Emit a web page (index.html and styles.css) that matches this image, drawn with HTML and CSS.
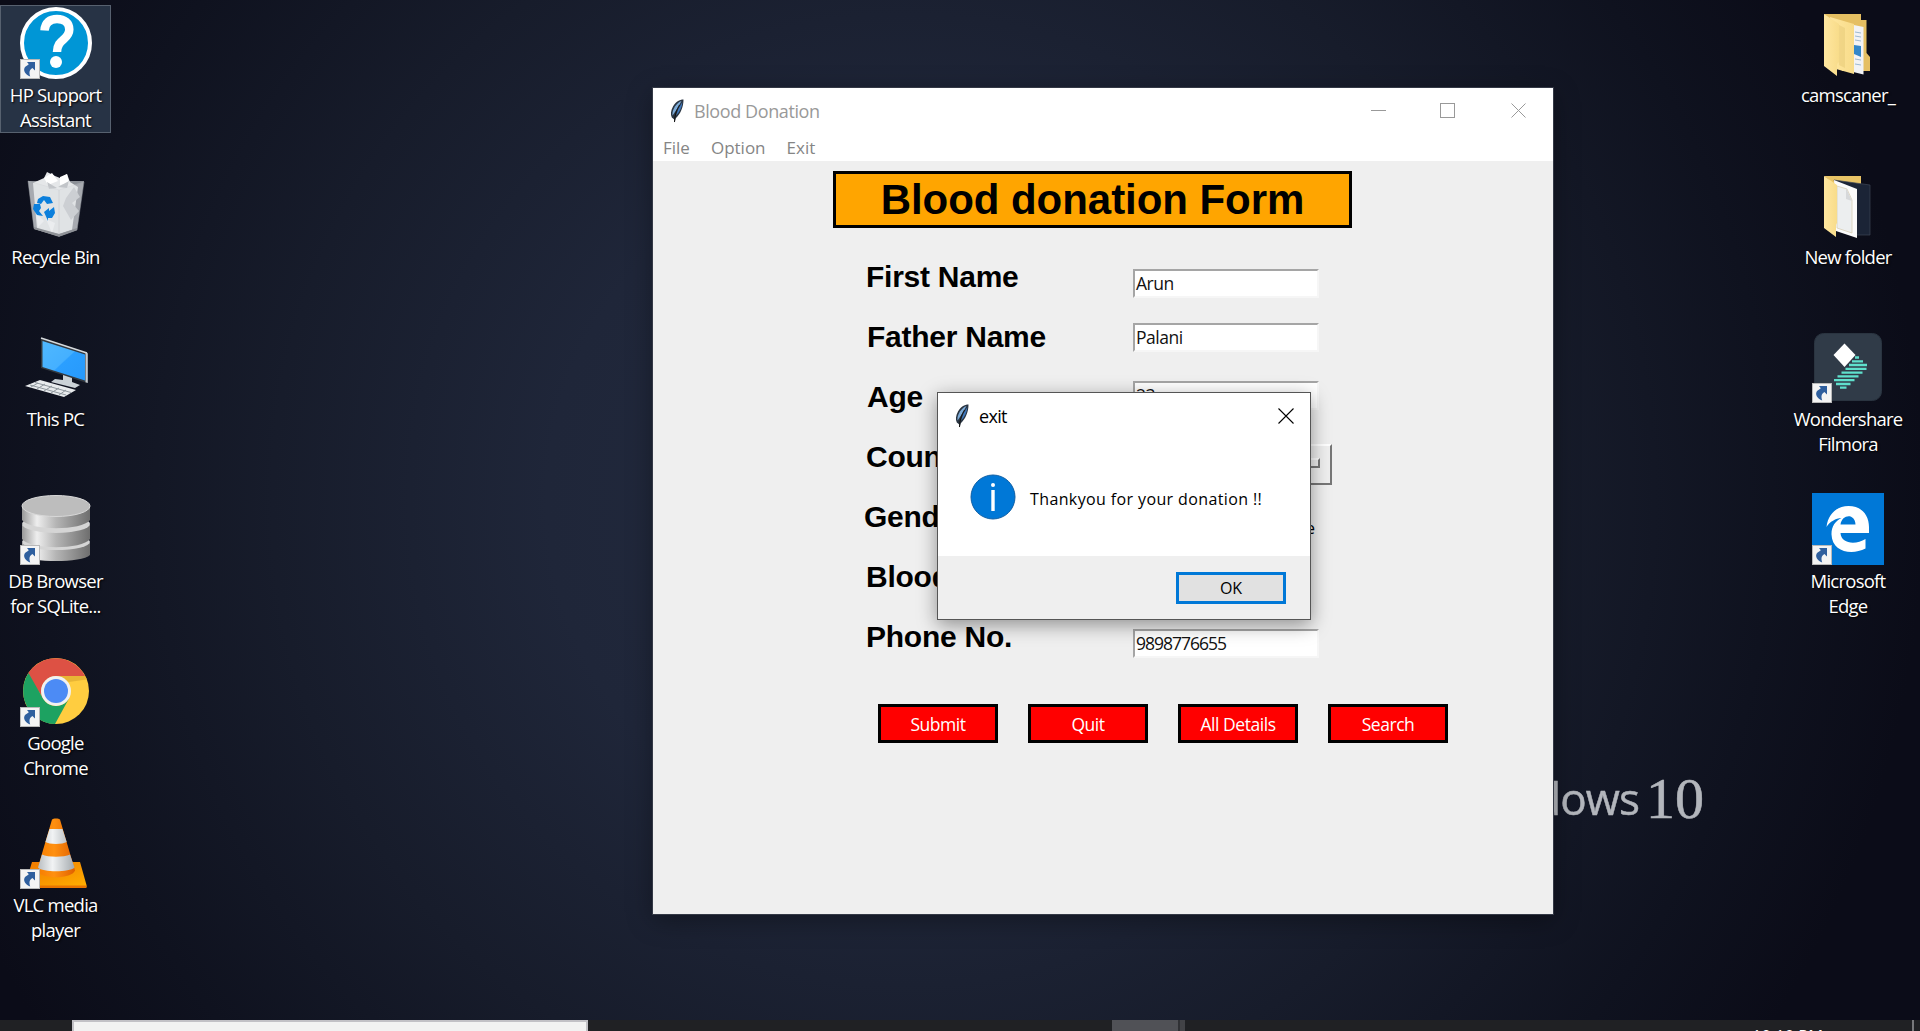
FILE: index.html
```html
<!DOCTYPE html>
<html lang="en">
<head>
<meta charset="utf-8">
<title>Blood Donation</title>
<link rel="stylesheet" href="styles.css">
</head>
<body>
<svg class="defs" width="0" height="0" aria-hidden="true">
  <defs>
    <linearGradient id="metal" x1="0" x2="1"><stop offset="0" stop-color="#999"/><stop offset=".22" stop-color="#eee"/><stop offset=".5" stop-color="#b5b5b5"/><stop offset="1" stop-color="#6e6e6e"/></linearGradient>
    <linearGradient id="cone" x1="0" x2="1"><stop offset="0" stop-color="#f57c00"/><stop offset=".45" stop-color="#ff9010"/><stop offset="1" stop-color="#e06000"/></linearGradient>
    <linearGradient id="coneBase" x1="0" y1="0" x2="1" y2="1"><stop offset="0" stop-color="#f07800"/><stop offset="1" stop-color="#ffb000"/></linearGradient>
    <linearGradient id="stripe" x1="0" x2="1"><stop offset="0" stop-color="#b9bec2"/><stop offset=".4" stop-color="#f1f3f4"/><stop offset="1" stop-color="#a4aaae"/></linearGradient>
    <linearGradient id="folder" x1="0" x2="1"><stop offset="0" stop-color="#ffe7a0"/><stop offset="1" stop-color="#f8dc8a"/></linearGradient>
    <linearGradient id="screen" x1="0" y1="0" x2="1" y2="1"><stop offset="0" stop-color="#4fb8ff"/><stop offset=".5" stop-color="#45b0ff"/><stop offset=".52" stop-color="#2b9fff"/><stop offset="1" stop-color="#2799fb"/></linearGradient>
    <symbol id="shortcut" viewBox="0 0 20 20">
      <rect x=".5" y=".5" width="19" height="19" fill="#f4f4f4" stroke="#b9b9b9"/>
      <path d="M7 3h8v8.500l-2.600-2.600C9.500 10.500 8.800 13 10.200 17.500 5.500 16 2 11 5.600 7.600c1-.9 2.200-1.500 3.200-2.400z" fill="#2f5f9e"/>
    </symbol>
    <symbol id="feather" viewBox="0 0 14 24">
      <path d="M13.500 .5C9.500 .5 5.500 3 3 7.500 .8 11.500 .3 15.500 1.800 18.500L4.300 20.500 4.600 23.500l1.200-4.300C10.500 15 13.500 8 13.500 .5z" fill="#2a3542"/>
      <path d="M11.500 2C8.500 3 5.300 6 3.600 10c-1 2.500-1.500 4.800-1 6.600L7 10z" fill="#7eacd8"/>
      <path d="M12.400 3C11.800 8.500 9.800 13 6 16.500L8.500 9.500z" fill="#3f78bd"/>
      <path d="M9.500 6C7 10.500 5 14 4.500 23" fill="none" stroke="#111" stroke-width="1"/>
    </symbol>
  </defs>
</svg>
<main class="desktop">
  <div class="wallpaper-logo" aria-hidden="true"><span class="brand">Windows</span><span class="ten">10</span></div>

  <section class="icons">
    <div class="item selected">
      <svg class="art" viewBox="0 0 72 72"><circle cx="36" cy="36" r="34" fill="#0096d6" stroke="#fff" stroke-width="4"/><path d="M24.500 23.500C25 15.500 30 12 37 12c7.500 0 12.300 4 12.300 10.500C49.300 33 37 32 37 45" fill="none" stroke="#fff" stroke-width="8.500"/><circle cx="36" cy="55" r="6" fill="#fff"/><use href="#shortcut" x="0" y="52" width="20" height="20"/></svg>
      <span class="label">HP Support<br>Assistant</span>
    </div>
    <div class="item">
      <svg class="art" viewBox="0 0 72 72"><path d="M8 12L64 12 57 61 39 67.500 14 60z" fill="#8c9097"/><path d="M13 14l11-5 3-6 8 4 5 2 7-4 3 8 8 5-6 43-13 4-22-5z" fill="#e5e7e9"/><path d="M24 9l8-5 6 8-10 4zM40 8l7-3 2 9-9 2z" fill="#fff"/><path d="M27 13l10 6-8 1zM38 18l11-6-2 7z" fill="#c2c5c9"/><path d="M54 18l6 10-8 6 7 8-8 9-8-14 3-8z" fill="#c6c9cd"/><path d="M16 44l8 8-6 6zM26 50l9 4-3 10z" fill="#f6f7f8"/><path d="M8 12l31 9 25-8-7 48-18 6.500-25-8z" fill="#d9dce0" opacity=".35" stroke="#c9ccd0"/><path d="M39 21v46" stroke="#c6c9cc" opacity=".6"/><path d="M18 30l5-3 7 1 3 6-6 1-3-4-3 4-4-1zM14 35l6 0 1 4-2 3 4 5-6-1-4-6zM24 43l5-4v3l5-4 1 6-3 5-4 0v3z" fill="#0b7fdc"/><path d="M14 58l25 7 18-6v2l-18 6.500L14 60z" fill="#8e9196"/></svg>
      <span class="label">Recycle Bin</span>
    </div>
    <div class="item">
      <svg class="art" viewBox="0 0 72 72"><path d="M21 7l46 15v30L21 37z" fill="#33383e"/><path d="M65.500 21.500l2.300.8V52l-2.300-.8z" fill="#c6cbd0"/><path d="M21 7l46 15" stroke="#d6dadd" stroke-width="1.500"/><path d="M22.500 10L65 23.500v26L22.500 36z" fill="url(#screen)"/><path d="M43 44l9 3v4l8 3-5 3-24-6 4-3 8 1z" fill="#cbd2d7"/><path d="M20 49l36 10-12 7L5 55z" fill="#e8ebed"/><path d="M10 54l36 10M15 51.500l36 10M18 52l-7 4M25 53l-8 5M32 55l-8 5M39 57l-8 5M46 59l-7 5" stroke="#8f979d" stroke-width="1"/></svg>
      <span class="label">This PC</span>
    </div>
    <div class="item">
      <svg class="art" viewBox="0 0 72 72"><path d="M2 50v12c8 8 60 8 68 0V50z" fill="url(#metal)"/><ellipse cx="36" cy="49" rx="34" ry="8" fill="#d5d5d5"/><path d="M2 32v14c8 11 60 11 68 0V32z" fill="url(#metal)"/><ellipse cx="36" cy="31" rx="34" ry="9" fill="#d5d5d5"/><path d="M2 13v14c8 11 60 11 68 0V13z" fill="url(#metal)"/><ellipse cx="36" cy="13" rx="34" ry="10.500" fill="#bdbdbd" stroke="#d8d8d8"/><use href="#shortcut" x="0" y="52" width="20" height="20"/></svg>
      <span class="label">DB Browser<br>for SQLite...</span>
    </div>
    <div class="item">
      <svg class="art" viewBox="0 0 72 72"><circle cx="36" cy="36" r="33" fill="#ffcd40"/><path d="M7.400 19.500A33 33 0 0 1 65 21H36a15 15 0 0 0-13 22z" fill="#dd5144"/><path d="M8.500 18A33 33 0 0 0 35 69L49 43.500A15 15 0 0 1 23 43.500z" fill="#1da261"/><path d="M36 21h29l1.500 3.500L49 27z" fill="#d9a52e" opacity=".6"/><circle cx="36" cy="36" r="15" fill="#f1f1f1"/><circle cx="36" cy="36" r="12" fill="#4c8bf5"/><use href="#shortcut" x="0" y="52" width="20" height="20"/></svg>
      <span class="label">Google<br>Chrome</span>
    </div>
    <div class="item">
      <svg class="art" viewBox="0 0 72 72"><path d="M12 45h48l6.500 23v2H5v-2z" fill="url(#coneBase)"/><path d="M5 68.500h61.500V71H5z" fill="#e87400"/><path d="M32 2.500c1-1.500 7-1.500 8 0l15 51c-3 9-35 9-38 0z" fill="url(#cone)"/><path d="M29.500 12h13l4.200 13c-4 2.500-17.500 2.500-21.300 0zM22 37.500c6 3 22 3 28 0l4.500 13c-5 5-32 5-36.500 0z" fill="url(#stripe)"/><use href="#shortcut" x="0" y="52" width="20" height="20"/></svg>
      <span class="label">VLC media<br>player</span>
    </div>
  </section>

  <section class="icons">
    <div class="item">
      <svg class="art" viewBox="0 0 72 72"><path d="M12 7h37v6h5.500v33l3.500 4v14H30z" fill="#e5bf62"/><path d="M37 17l14.500 3v47.500L37 64z" fill="#f2f3f5"/><path d="M43 25l6 1M43 29l6 1M43 33l6 1M43 52l6 1M43 57l6 1" stroke="#9db9d0"/><path d="M42 38l7 1v11l-7-3z" fill="#3287c9"/><path d="M18 10l24 7v50L24 62z" fill="url(#folder)"/><path d="M27 18l6 3v40l-6-3z" fill="#e9cd7c" opacity=".6"/><path d="M12 7l15 10v38l-2 2v12L12 59z" fill="url(#folder)"/></svg>
      <span class="label">camscaner_</span>
    </div>
    <div class="item">
      <svg class="art" viewBox="0 0 72 72"><path d="M12 7h37v10H24z" fill="#e9c466"/><path d="M22 11l36 5v50H44z" fill="#1b2436" stroke="#3e4655" stroke-width=".7"/><path d="M22 11l23 9v49L24 62z" fill="#fbfbfb"/><path d="M25 17l10 3 5 11v33l-15-5z" fill="#eceeef" stroke="#d8cfb8" stroke-width=".8"/><path d="M34 19v11l6 2z" fill="#d6d8da"/><path d="M12 7l13 9v38l-1 2v12L12 59z" fill="url(#folder)"/></svg>
      <span class="label">New folder</span>
    </div>
    <div class="item">
      <svg class="art" viewBox="0 0 72 72"><rect x="2.500" y="2.500" width="67" height="67" rx="9" fill="#303b48" stroke="#2a3440"/><g stroke="#5fe0cc" stroke-width="2.300"><path d="M43 26.500h4M40 30.300h11M37 34h18M33.500 37.800h21M29.500 41.600h21M25.500 45.400h21M22 49.200h20.500M24 53h14.500M28 56.600h6.500"/></g><path d="M32.500 12.500L43.500 24 32.500 36 21.500 24z" fill="#fff"/><use href="#shortcut" x="0" y="52" width="20" height="20"/></svg>
      <span class="label">Wondershare<br>Filmora</span>
    </div>
    <div class="item">
      <svg class="art" viewBox="0 0 72 72"><path d="M0 0h72v72H0z" fill="#0078d7"/><path d="M14.500 34C16 21 25 13 36.500 13 50 13 57 22.500 57 34v6H28.500c.5 11 15.500 12 25 6v9.500C39 63 20 58.500 19.500 41.500 19.300 34 23 28 29.500 25 23.500 25.500 18 28.500 14.500 34zM28.500 31.500H43.500C43 20 30 21 28.500 31.500z" fill="#fff"/><use href="#shortcut" x="0" y="52" width="20" height="20"/></svg>
      <span class="label">Microsoft<br>Edge</span>
    </div>
  </section>

  <section class="window app">
    <header class="titlebar">
      <svg class="feather"><use href="#feather"/></svg>
      <span class="caption">Blood Donation</span>
      <svg class="controls" width="156" height="16" viewBox="0 0 156 16" fill="none" stroke="#999"><path d="M0 7.500h15"/><rect x="69.500" y=".5" width="14" height="14"/><path d="M140.500 .5l14 14m0-14l-14 14"/></svg>
    </header>
    <nav class="menu"><span>File</span><span>Option</span><span>Exit</span></nav>
    <div class="content">
      <h1 class="form-title">Blood donation Form</h1>
      <div class="rows">
        <div class="row"><label>First Name</label><div class="entry first">Arun</div></div>
        <div class="row"><label class="inset">Father Name</label><div class="entry father">Palani</div></div>
        <div class="row"><label class="inset">Age</label><div class="entry age">23</div></div>
        <div class="row"><label>Country</label><div class="option"><i></i></div></div>
        <div class="row"><label class="outset">Gender</label><div class="radio">Female</div></div>
        <div class="row"><label>Blood</label></div>
        <div class="row"><label>Phone No.</label><div class="entry phone">9898776655</div></div>
      </div>
      <div class="buttons"><button>Submit</button><button>Quit</button><button>All Details</button><button>Search</button></div>
    </div>
  </section>

  <section class="window dialog">
    <header class="dialog-bar">
      <svg class="feather"><use href="#feather"/></svg>
      <span class="dialog-caption">exit</span>
      <svg class="close" width="16" height="16" viewBox="0 0 16 16" fill="none" stroke="#000" stroke-width="1.100"><path d="M.5 .5l15 15m0-15l-15 15"/></svg>
    </header>
    <div class="message">
      <svg width="46" height="46" viewBox="0 0 46 46"><circle cx="23" cy="23" r="22" fill="#0078d7" stroke="#0f5fa5"/><path d="M23 16v21" stroke="#fff" stroke-width="3.400"/><circle cx="23" cy="11" r="2" fill="#fff"/></svg>
      <span>Thankyou for your donation !!</span>
    </div>
    <footer class="actions"><button class="ok">OK</button></footer>
  </section>

  <footer class="taskbar">
    <div class="search"></div>
    <div class="task"></div><div class="task-more"></div>
    <span class="clock">10:10 PM</span>
    <div class="peek"></div>
  </footer>
</main>
</body>
</html>
```
FILE: styles.css
```css
* { box-sizing: border-box; }
body { margin: 0; font-family: "Open Sans", "Noto Sans", sans-serif; }
button { font: inherit; padding: 0; border-radius: 0; }
.defs { position: absolute; }
.desktop {
  position: relative; width: 1920px; height: 1031px; overflow: hidden;
  display: flex; justify-content: space-between; align-items: flex-start; padding-top: 5px;
  background: radial-gradient(ellipse 1020px 1000px at 905px 500px, #232b3f 0%, #1f2639 35%, #171c2b 62%, #0f121f 85%, #0b0c18 100%);
}
.icons { display: flex; flex-direction: column; gap: 34px; width: 112px; }
.icons + .icons { width: 128px; }
.item { height: 128px; width: 111px; padding-top: 1px; display: flex; flex-direction: column; align-items: center; border: 1px solid transparent; }
.icons + .icons .item { width: 112px; }
.item.selected { background: #273345; border-color: #57616f; }
.art { width: 72px; height: 72px; flex: none; }
.label { color: #fff; font-size: 18.5px; line-height: 25px; letter-spacing: -.75px; text-align: center; white-space: nowrap; margin-top: 3px; text-shadow: 1px 1px 2px #000; }

.wallpaper-logo { position: absolute; right: 216px; top: 766px; display: flex; align-items: flex-start; gap: 7px; color: #b3b6bc; filter: blur(.6px); }
.brand { font-size: 44px; line-height: 64px; letter-spacing: -.9px; -webkit-text-stroke: .5px #b3b6bc; }
.ten { font: 58px/66px "Liberation Serif", serif; -webkit-text-stroke: .6px #b3b6bc; }

.window { position: absolute; }
.feather { width: 14px; height: 24px; flex: none; }
.app { left: 653px; top: 88px; width: 900px; height: 826px; background: #efefef; box-shadow: 0 0 0 1px #343946, 0 6px 24px rgba(0,0,0,.35); }
.titlebar { height: 46px; background: #fff; display: flex; align-items: center; padding: 0 26px 0 17px; }
.caption { margin-left: 10px; font-size: 18px; color: #999; letter-spacing: -.4px; }
.controls { margin-left: auto; }
.menu { height: 27px; background: #fff; display: flex; gap: 21px; padding-left: 10px; font-size: 17px; line-height: 28px; color: #858585; }
.content { padding: 10px 0 0; }
.form-title { margin: 0 0 0 180px; width: 519px; height: 57px; border: 3px solid #000; background: #ffa500; text-align: center; font: bold 42px/51px "Liberation Sans", sans-serif; letter-spacing: -.05px; }
.rows { padding: 31px 0 0 213px; }
.row { height: 60px; display: flex; align-items: flex-start; }
.row label { width: 267px; font: bold 30px/35px "Liberation Sans", sans-serif; letter-spacing: -.25px; }
.row .inset { padding-left: 1px; }
.row .outset { margin-left: -2px; width: 269px; }
.entry { width: 186px; height: 29px; padding-left: 1px; background: #fff; border: 2px solid #f6f6f6; border-top-color: #a5a5a5; border-left-color: #a5a5a5; font-size: 17.5px; line-height: 25px; letter-spacing: -.5px; color: #111; }
.first { margin-top: 10px; }
.father { margin-top: 4px; }
.age { margin-top: 2px; }
.phone { margin-top: 10px; letter-spacing: -1px; }
.option { width: 199px; height: 41px; margin-top: 5px; border: 2px solid #fff; border-right-color: #777; border-bottom-color: #777; display: flex; justify-content: flex-end; padding: 12px 10px; }
.option i { width: 20px; height: 10px; border: 2px solid #fff; border-right-color: #777; border-bottom-color: #777; }
.radio { width: 182px; margin-top: 16px; text-align: right; font-size: 17px; line-height: 25px; }
.buttons { display: flex; gap: 30px; padding: 25px 0 0 225px; }
.buttons button { width: 120px; height: 39px; background: #f00; border: 3px solid #000; color: #fff; font-size: 17.5px; letter-spacing: -.45px; line-height: 30px; }

.dialog { left: 937px; top: 392px; width: 374px; height: 228px; border: 1px solid #555; background: #fff; box-shadow: 0 5px 18px rgba(0,0,0,.4); display: flex; flex-direction: column; }
.dialog-bar { height: 45px; display: flex; align-items: center; padding: 0 16px 0 17px; }
.dialog-caption { margin-left: 10px; font-size: 18px; letter-spacing: -.7px; }
.close { margin-left: auto; }
.message { flex: 1; display: flex; align-items: flex-start; gap: 14px; padding: 36px 0 0 32px; font-size: 16px; line-height: 50px; letter-spacing: .38px; white-space: nowrap; }
.actions { height: 63px; background: #efefef; display: flex; justify-content: flex-end; padding: 16px 24px 0; }
.ok { width: 110px; height: 32px; background: #e1e1e1; border: 3px solid #0078d7; font-size: 16px; line-height: 27px; }

.taskbar { position: absolute; left: 0; right: 0; bottom: 0; height: 11px; background: #202124; display: flex; overflow: hidden; }
.search { margin-left: 72px; width: 516px; background: #f2f2f2; border: 2px solid #c2c1c6; border-bottom: 0; }
.task { margin-left: 524px; width: 66px; background: #505156; }
.task-more { width: 7px; background: #424347; border-left: 2px solid #303135; }
.clock { margin: 3px 0 0 567px; width: 74px; height: 25px; font-size: 16.500px; line-height: 25px; color: #fff; white-space: nowrap; }
.peek { margin-left: 86px; width: 2px; background: #77787b; }
```
